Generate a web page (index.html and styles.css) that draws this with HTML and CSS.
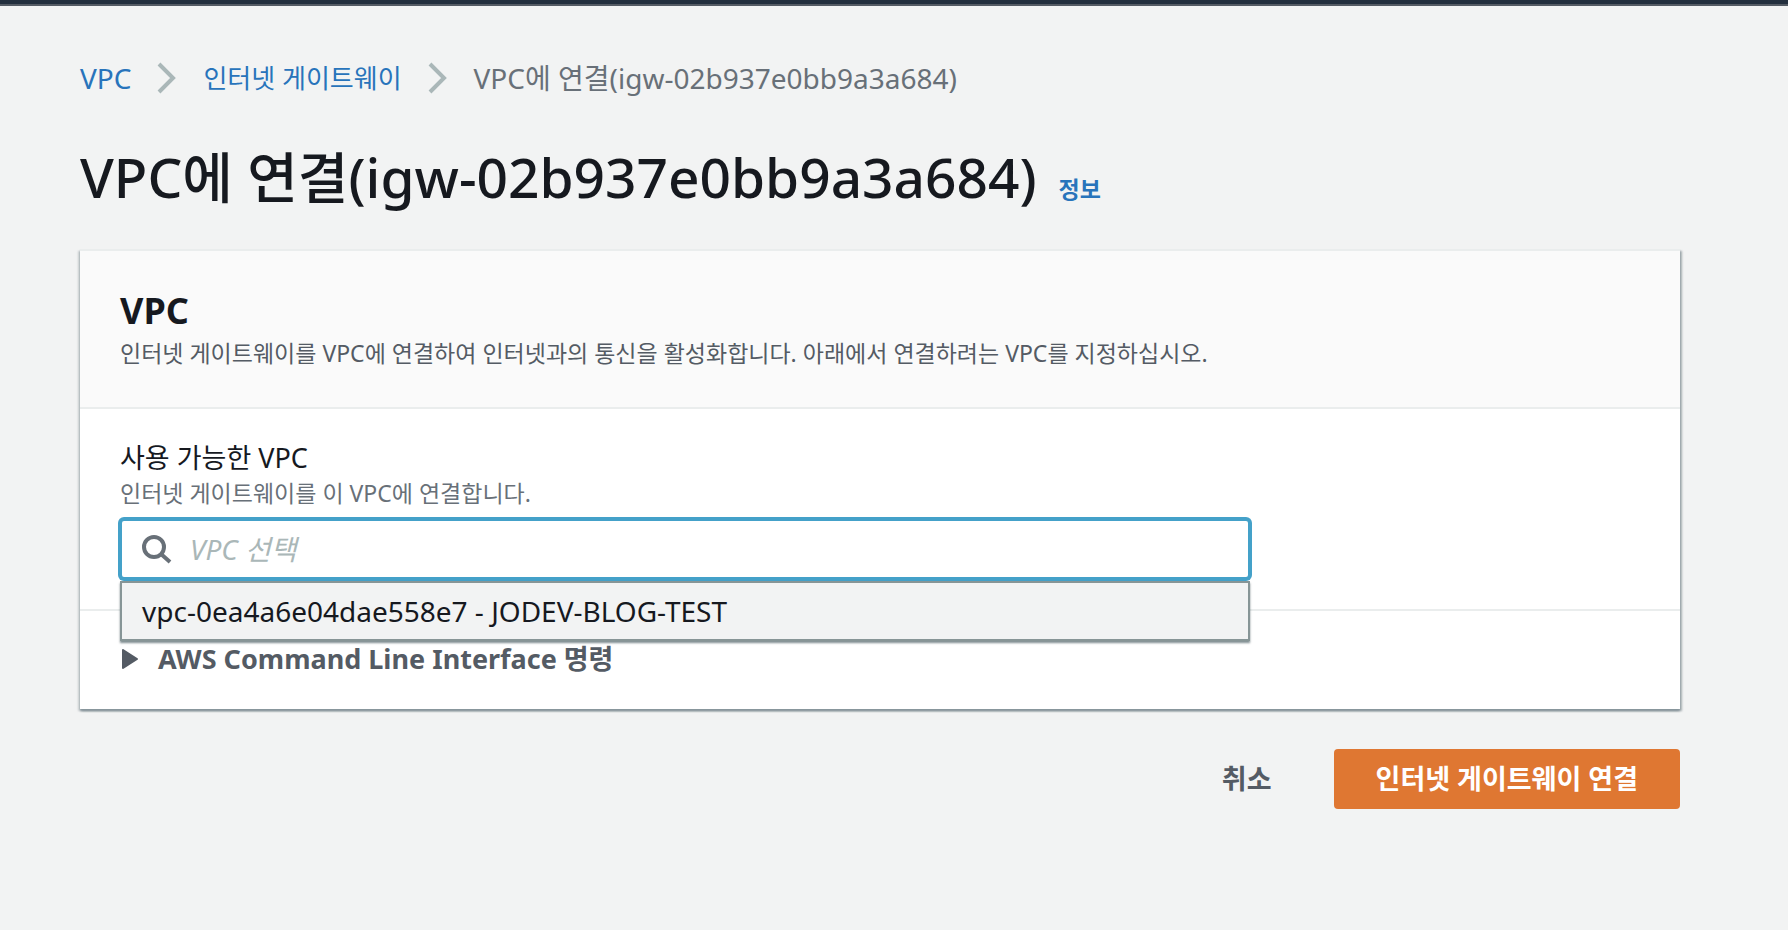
FILE: index.html
```
<!DOCTYPE html>
<html lang="ko">
  <head>
    <meta charset="UTF-8" />
    <meta name="viewport" content="width=device-width, initial-scale=1.0" />
    <title>VPC에 연결</title>
    <link rel="stylesheet" href="styles.css">
  </head>
  <body>
    <div class="topbar"></div>

    <main class="page">
      <!-- Breadcrumb -->
      <nav class="breadcrumb">
        <a href="#">VPC</a>
        <svg class="chevron" viewBox="0 0 20 32" aria-hidden="true">
          <path d="M2 2l14 14L2 30" />
        </svg>
        <a class="korean" href="#">인터넷 게이트웨이</a>
        <svg class="chevron" viewBox="0 0 20 32" aria-hidden="true">
          <path d="M2 2l14 14L2 30" />
        </svg>
        <span>VPC에 연결(igw-02b937e0bb9a3a684)</span>
      </nav>

      <div class="title-row">
        <h1>VPC에 연결(igw-02b937e0bb9a3a684)</h1>
        <a class="info" href="#">정보</a>
      </div>

      <form>
        <div class="card">
          <div class="card-header">
            <h2>VPC</h2>
            <p>인터넷 게이트웨이를 VPC에 연결하여 인터넷과의 통신을 활성화합니다. 아래에서 연결하려는 VPC를 지정하십시오.</p>
          </div>

          <!-- VPC select -->
          <div class="card-body">
            <label for="vpcSearch">사용 가능한 VPC</label>
            <p class="hint" id="vpcHint">인터넷 게이트웨이를 이 VPC에 연결합니다.</p>
            <div class="combo">
              <div class="search-box">
                <svg class="search-icon" viewBox="0 0 32 32" aria-hidden="true">
                  <circle cx="12" cy="14" r="10" />
                  <path d="M19 21l9 8" />
                </svg>
                <input id="vpcSearch" type="text" placeholder="VPC 선택" aria-describedby="vpcHint" />
              </div>
              <div class="dropdown">
                <button type="button" class="option">vpc-0ea4a6e04dae558e7 - JODEV-BLOG-TEST</button>
              </div>
            </div>
          </div>

          <details class="cli">
            <summary>
              <svg class="caret" viewBox="0 0 16 20" aria-hidden="true">
                <path d="M1 1v18L15 10z" />
              </svg>
              AWS Command Line Interface 명령
            </summary>
          </details>
        </div>

        <div class="actions">
          <button type="button" class="btn btn-link">취소</button>
          <button type="submit" class="btn btn-primary">인터넷 게이트웨이 연결</button>
        </div>
      </form>
    </main>
  </body>
</html>
```
FILE: styles.css
```
* {
  box-sizing: border-box;
}

body {
  margin: 0;
  background: #f2f3f3;
  color: #16191f;
  font-family: "Noto Sans", "Noto Sans CJK KR", sans-serif;
  font-size: 28px;
  line-height: 40px;
}

a {
  color: #2874bb;
  text-decoration: none;
}

h1,
h2,
p {
  margin: 0;
}

.topbar {
  height: 6px;
  background: #232f3e;
  border-bottom: 2px solid #545b64;
}

.page {
  padding: 52px 108px 40px 80px;
}

/* Breadcrumb */
.breadcrumb {
  display: flex;
  align-items: center;
  color: #687078;
}

.breadcrumb .korean {
  font-size: 26px;
}

.chevron {
  width: 20px;
  height: 32px;
  margin: 0 26px;
  fill: none;
  stroke: #aab7b8;
  stroke-width: 4;
}

/* Title */
.title-row {
  display: flex;
  align-items: baseline;
  gap: 22px;
  margin: 39px 0 32px;
}

h1 {
  font-size: 55px;
  font-weight: 500;
  line-height: 80px;
}

.info {
  font-size: 23px;
  font-weight: 700;
}

/* Card */
.card {
  background: #fff;
  border-top: 2px solid #eaeded;
  box-shadow: 0 2px 2px #87959c, 2px 2px 2px rgba(0, 28, 36, 0.3),
    -2px 2px 2px rgba(0, 28, 36, 0.15);
}

.card-header {
  padding: 36px 40px;
  background: #fafafa;
  border-bottom: 2px solid #eaeded;
}

h2 {
  font-size: 36px;
  font-weight: 700;
  line-height: 48px;
}

.card-header p {
  color: #545b64;
  font-size: 23px;
  line-height: 36px;
}

.card-body {
  padding: 30px 40px 30px;
  border-bottom: 2px solid #eaeded;
}

.card-body label {
  display: block;
  font-size: 27px;
  line-height: 38px;
}

.hint {
  color: #687078;
  font-size: 23px;
  line-height: 32px;
}

.combo {
  position: relative;
  width: calc(75% - 10px);
  margin-top: 10px;
}

.search-box {
  display: flex;
  align-items: center;
  height: 60px;
  padding: 0 20px;
  gap: 16px;
  background: #fff;
  border: 2px solid #44a1c9;
  border-radius: 4px;
  box-shadow: 0 0 0 2px #44a1c9;
}

.search-icon {
  width: 32px;
  height: 32px;
  fill: none;
  stroke: #687078;
  stroke-width: 4;
}

.search-box input {
  flex: 1;
  min-width: 0;
  padding: 0;
  border: none;
  outline: none;
  background: transparent;
  color: #16191f;
  font: inherit;
}

.search-box input::placeholder {
  color: #aab7b8;
  font-style: italic;
}

.dropdown {
  position: absolute;
  top: 100%;
  left: 0;
  right: 0;
  margin-top: 2px;
  border: 2px solid #879596;
  box-shadow: 0 2px 2px rgba(0, 28, 36, 0.5);
}

.option {
  display: block;
  width: 100%;
  padding: 8px 20px;
  border: none;
  background: #f2f3f3;
  color: #16191f;
  font: inherit;
  text-align: left;
}

/* CLI section */
.cli summary {
  display: flex;
  align-items: center;
  gap: 20px;
  padding: 28px 42px 30px;
  color: #545b64;
  font-size: 27px;
  font-weight: 700;
  list-style: none;
  cursor: pointer;
}

.caret {
  width: 16px;
  height: 20px;
  fill: #545b64;
  stroke: #545b64;
  stroke-width: 2;
  stroke-linejoin: round;
}

/* Buttons */
.actions {
  display: flex;
  justify-content: flex-end;
  gap: 20px;
  margin-top: 40px;
}

.btn {
  padding: 10px 42px;
  border: none;
  border-radius: 4px;
  font: inherit;
  font-size: 27px;
  font-weight: 700;
  cursor: pointer;
}

.btn-link {
  background: transparent;
  color: #545b64;
}

.btn-primary {
  background: #df7732;
  color: #fff;
}
```
